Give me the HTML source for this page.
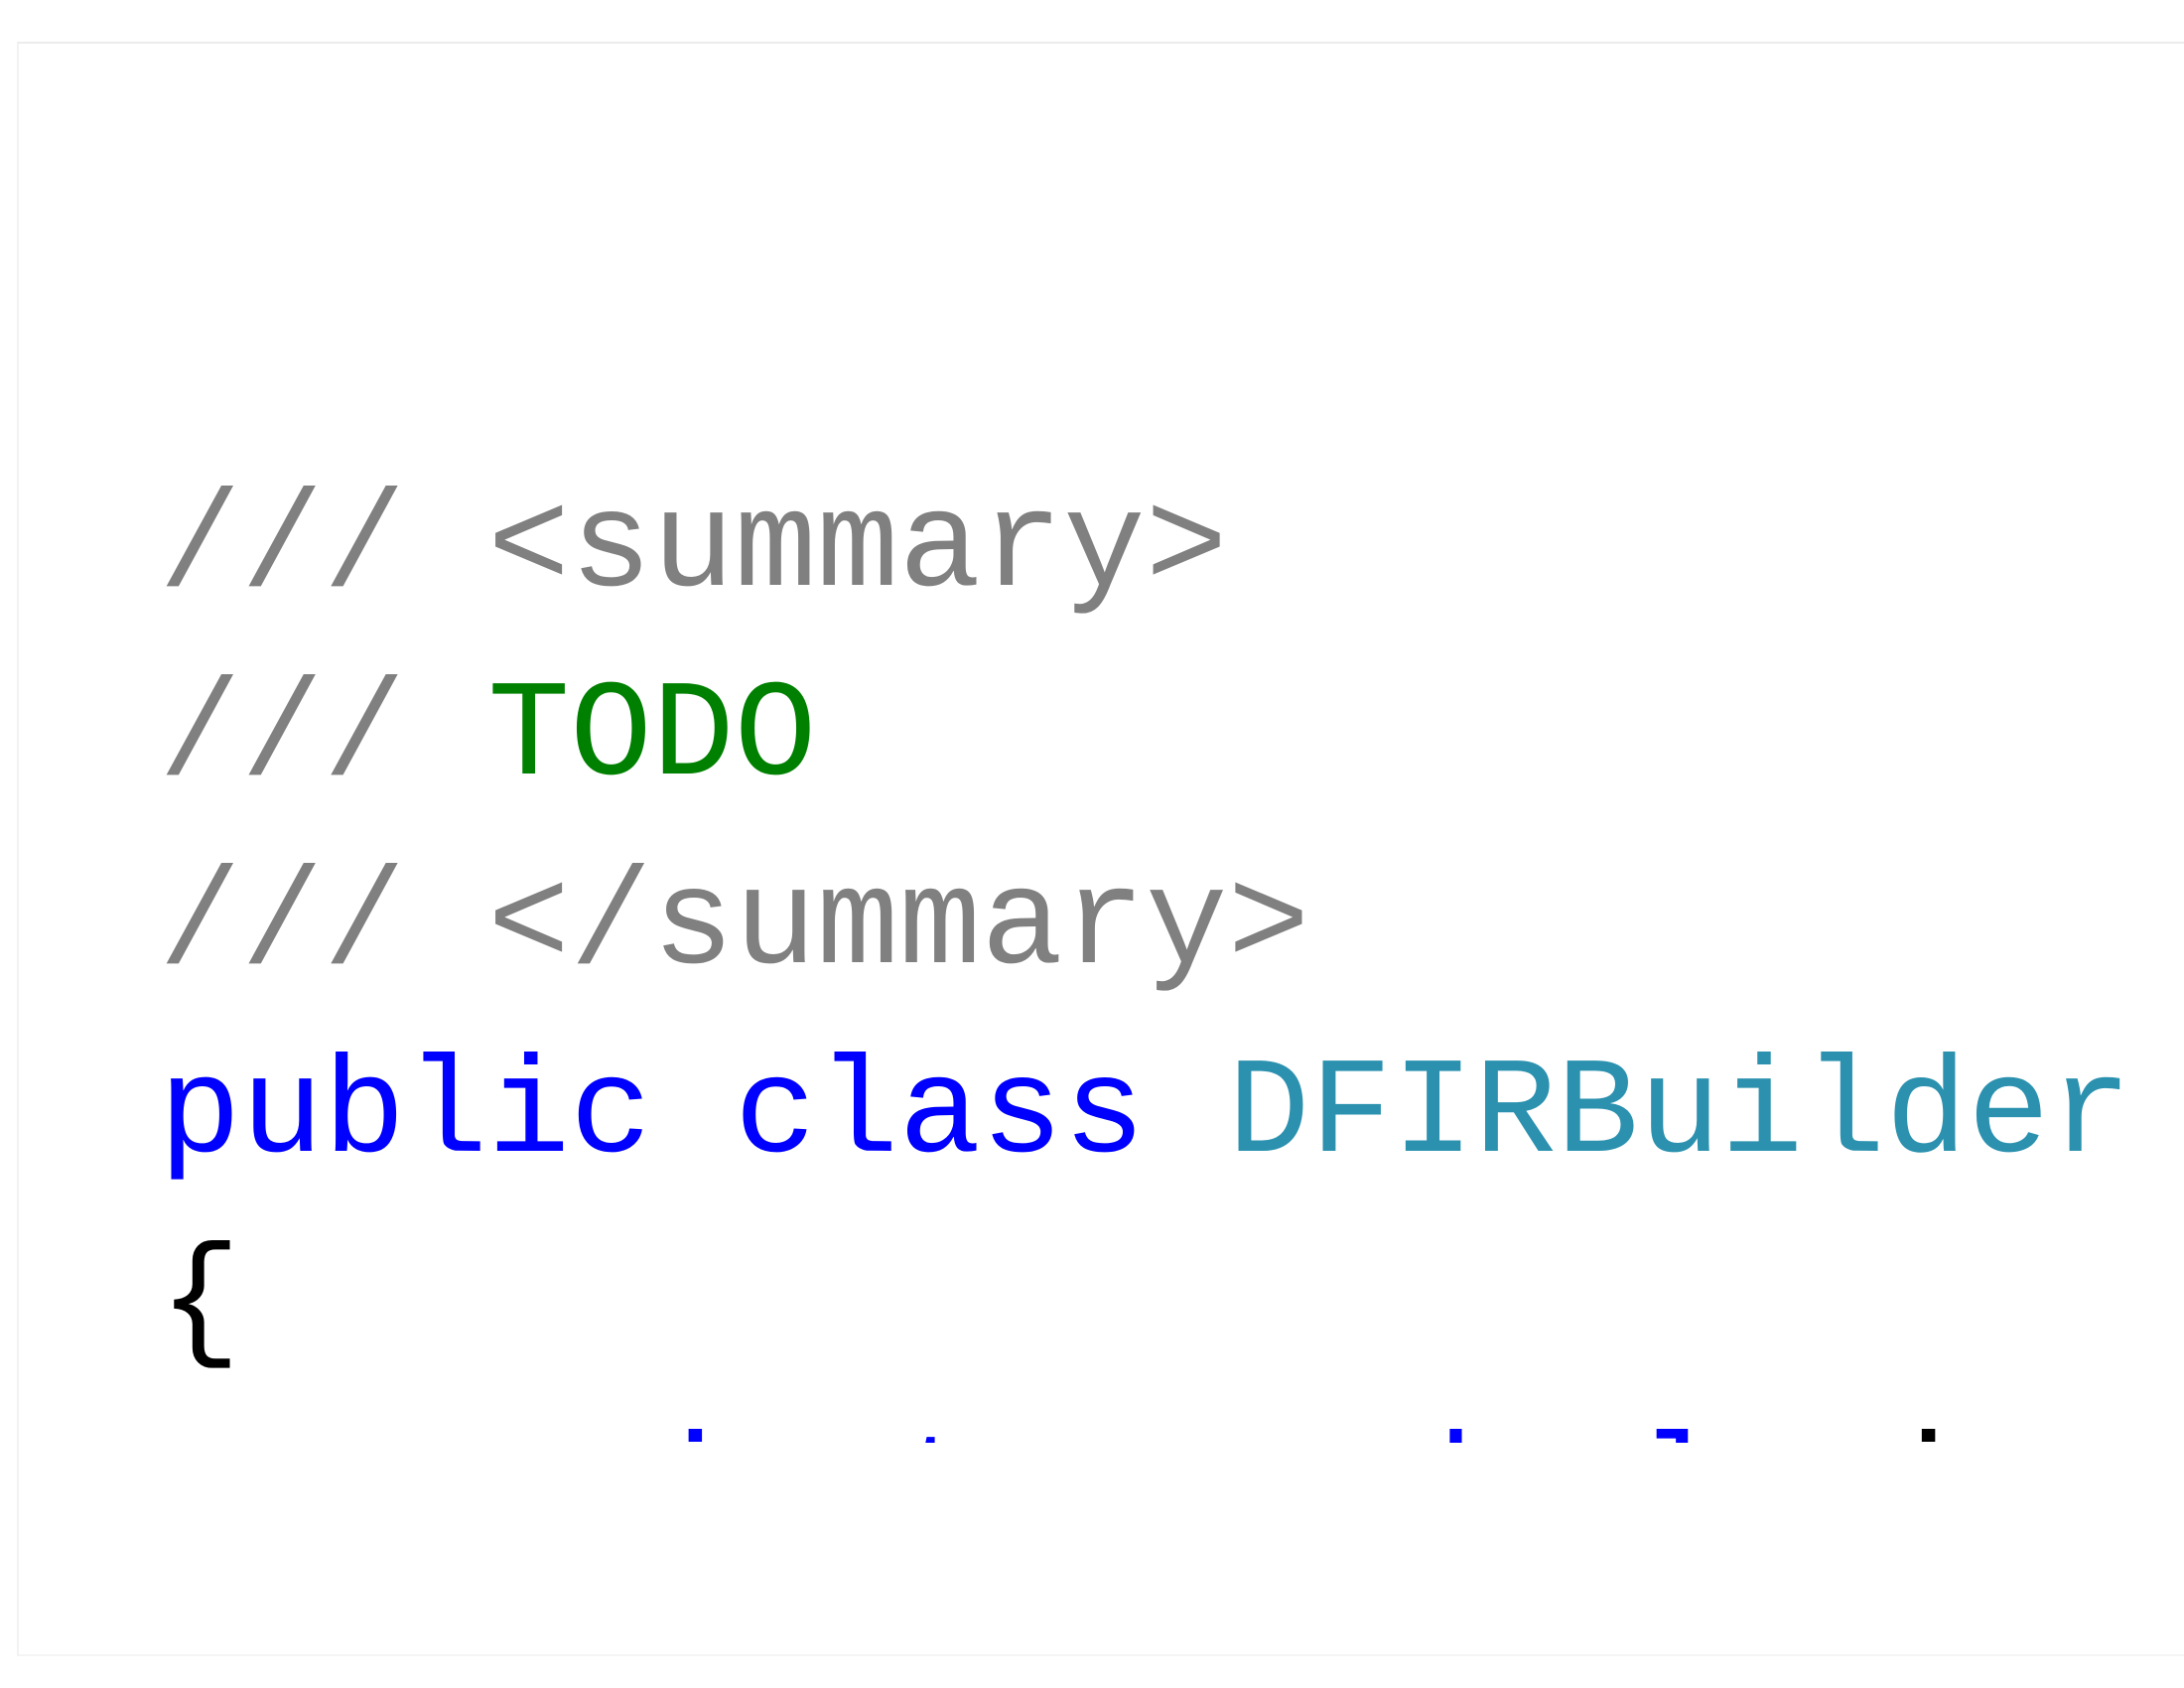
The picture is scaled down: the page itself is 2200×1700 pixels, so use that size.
<!DOCTYPE html>
<html><head><meta charset="utf-8"><style>
html,body{margin:0;padding:0;background:#fff;width:2200px;height:1700px;overflow:hidden;}
.frame{position:absolute;left:17px;top:42px;width:2200px;height:1622px;border-top:2px solid #ececec;border-left:2px solid #f2f2f2;border-bottom:2px solid #f4f4f4;}
.clip{position:absolute;left:0;top:0;width:2200px;height:1453px;overflow:hidden;}
pre{position:absolute;left:160px;top:458px;margin:0;font-family:"Liberation Mono",monospace;font-size:138px;line-height:190px;color:#000;white-space:pre;}
.c{color:#808080}.g{color:#008000}.k{color:#0000ff}.t{color:#2b91af}
</style></head><body>
<div class="frame"></div>
<div class="clip">
<pre><span class="c">/// &lt;summary&gt;</span>
<span class="c">/// </span><span class="g">TODO</span>
<span class="c">/// &lt;/summary&gt;</span>
<span class="k">public</span> <span class="k">class</span> <span class="t">DFIRBuilder</span>
{
    <span class="k">private</span> <span class="k">readonly</span> i</pre>
</div>
</body></html>
